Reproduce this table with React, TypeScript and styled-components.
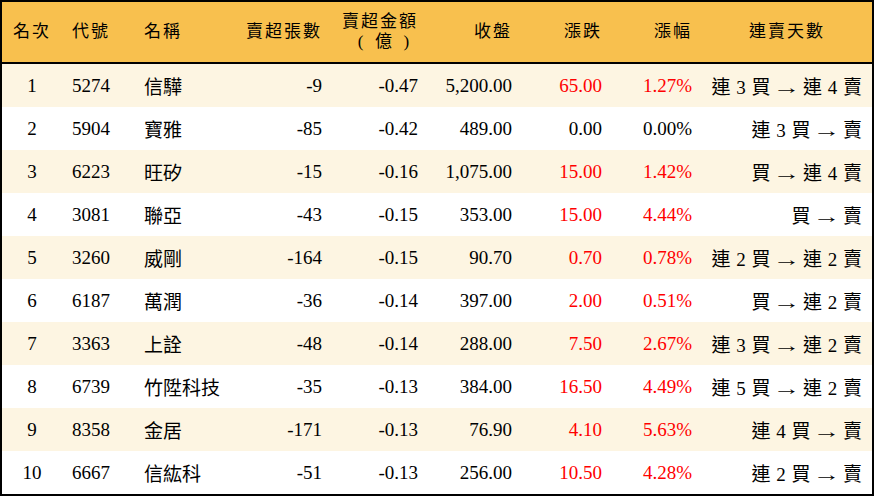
import React from 'react';
import styled, { createGlobalStyle } from 'styled-components';

const GlobalStyle = createGlobalStyle`
  html, body {
    margin: 0;
    padding: 0;
    background: #fff;
  }
  * {
    box-sizing: border-box;
  }
`;

type Align = 'left' | 'right' | 'center';

const Paren = styled.span`
  display: inline-block;
  white-space: pre;
  letter-spacing: 1px;
  padding-left: 8px;
`;

const columns: { title: React.ReactNode; width: number; head: Align; body: Align }[] = [
  { title: '名次', width: 60, head: 'center', body: 'center' },
  { title: '代號', width: 72, head: 'left', body: 'left' },
  { title: '名稱', width: 98, head: 'left', body: 'left' },
  { title: '賣超張數', width: 100, head: 'right', body: 'right' },
  {
    title: (
      <>
        賣超金額
        <br />
        <Paren>{'(  億  )'}</Paren>
      </>
    ),
    width: 96,
    head: 'center',
    body: 'right',
  },
  { title: '收盤', width: 94, head: 'right', body: 'right' },
  { title: '漲跌', width: 90, head: 'right', body: 'right' },
  { title: '漲幅', width: 90, head: 'right', body: 'right' },
  { title: '連賣天數', width: 170, head: 'center', body: 'right' },
];

const rows = [
  ['1', '5274', '信驊', '-9', '-0.47', '5,200.00', '65.00', '1.27%', '連 3 買 → 連 4 賣'],
  ['2', '5904', '寶雅', '-85', '-0.42', '489.00', '0.00', '0.00%', '連 3 買 → 賣'],
  ['3', '6223', '旺矽', '-15', '-0.16', '1,075.00', '15.00', '1.42%', '買 → 連 4 賣'],
  ['4', '3081', '聯亞', '-43', '-0.15', '353.00', '15.00', '4.44%', '買 → 賣'],
  ['5', '3260', '威剛', '-164', '-0.15', '90.70', '0.70', '0.78%', '連 2 買 → 連 2 賣'],
  ['6', '6187', '萬潤', '-36', '-0.14', '397.00', '2.00', '0.51%', '買 → 連 2 賣'],
  ['7', '3363', '上詮', '-48', '-0.14', '288.00', '7.50', '2.67%', '連 3 買 → 連 2 賣'],
  ['8', '6739', '竹陞科技', '-35', '-0.13', '384.00', '16.50', '4.49%', '連 5 買 → 連 2 賣'],
  ['9', '8358', '金居', '-171', '-0.13', '76.90', '4.10', '5.63%', '連 4 買 → 賣'],
  ['10', '6667', '信紘科', '-51', '-0.13', '256.00', '10.50', '4.28%', '連 2 買 → 賣'],
];

const template = columns.map(c => `${c.width}px`).join(' ');

const Table = styled.div`
  width: 874px;
  border: 2px solid #000;
  font-family: 'Liberation Serif', 'Noto Sans CJK TC', serif;
  color: #000;
`;

const HeaderRow = styled.div`
  display: grid;
  grid-template-columns: ${template};
  height: 62px;
  background: #f8c04e;
  border-bottom: 2px solid #000;
`;

const HeadCell = styled.div<{ $align: Align }>`
  display: flex;
  align-items: center;
  justify-content: ${p =>
    p.$align === 'left' ? 'flex-start' : p.$align === 'right' ? 'flex-end' : 'center'};
  text-align: ${p => p.$align};
  padding: 0 10px;
  font-size: 17px;
  letter-spacing: 2px;
  line-height: 20px;
`;

const Row = styled.div<{ $alt: boolean }>`
  display: grid;
  grid-template-columns: ${template};
  height: 43px;
  background: ${p => (p.$alt ? '#fdf5e2' : '#fff')};
`;

const Cell = styled.div<{ $align: Align; $red?: boolean }>`
  display: flex;
  align-items: center;
  justify-content: ${p =>
    p.$align === 'left' ? 'flex-start' : p.$align === 'right' ? 'flex-end' : 'center'};
  padding: 0 10px;
  font-size: 19px;
  white-space: pre;
  color: ${p => (p.$red ? '#ff0000' : '#000')};
`;

const Streak = styled.span`
  word-spacing: 1px;
`;

const Arrow = styled.span`
  display: inline-block;
  transform: scaleX(1.45);
  margin: 0 1px;
`;

function renderStreak(text: string) {
  const [buy, sell] = text.split(' → ');
  return (
    <Streak>
      {buy} <Arrow>→</Arrow> {sell}
    </Streak>
  );
}

export default function App() {
  return (
    <>
      <GlobalStyle />
      <Table>
        <HeaderRow>
          {columns.map((c, i) => (
            <HeadCell key={i} $align={c.head}>
              <span>{c.title}</span>
            </HeadCell>
          ))}
        </HeaderRow>
        {rows.map((r, ri) => {
          const up = parseFloat(r[6]) > 0;
          return (
            <Row key={ri} $alt={ri % 2 === 0}>
              {r.map((v, ci) => (
                <Cell key={ci} $align={columns[ci].body} $red={(ci === 6 || ci === 7) && up}>
                  {ci === 8 ? renderStreak(v) : v}
                </Cell>
              ))}
            </Row>
          );
        })}
      </Table>
    </>
  );
}
